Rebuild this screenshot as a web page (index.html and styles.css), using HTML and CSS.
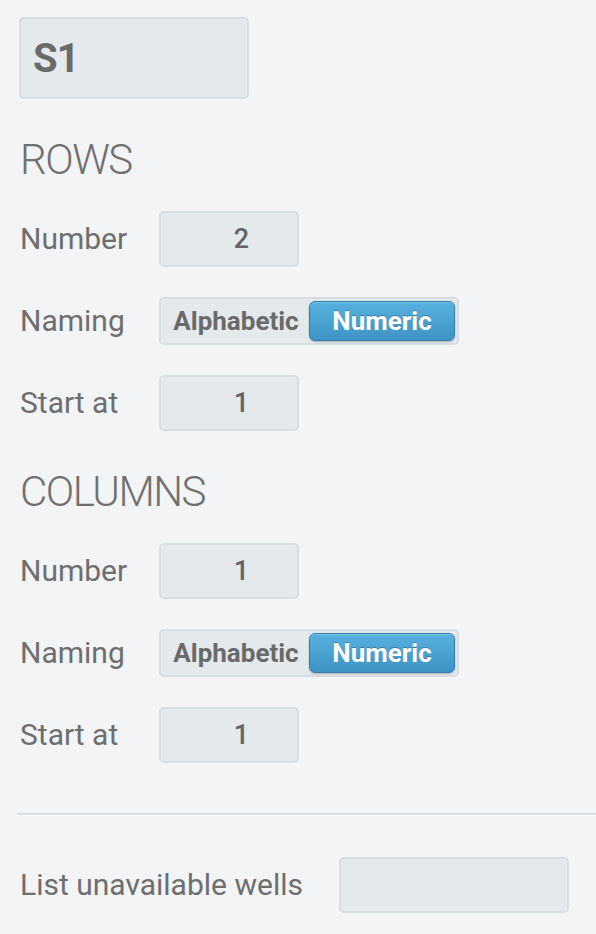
FILE: index.html
```html
<!DOCTYPE html>
<html>
<head>
<meta charset="utf-8">
<link rel="stylesheet" href="styles.css">
</head>
<body>
<div class="panel">
  <div class="name-box">S1</div>

  <h2 class="section-title">ROWS</h2>
  <div class="fields">
    <div class="label">Number</div>
    <div class="num-box">2</div>
    <div class="label">Naming</div>
    <div class="toggle">
      <span class="opt">Alphabetic</span>
      <span class="opt active">Numeric</span>
    </div>
    <div class="label">Start at</div>
    <div class="num-box">1</div>
  </div>

  <h2 class="section-title">COLUMNS</h2>
  <div class="fields">
    <div class="label">Number</div>
    <div class="num-box">1</div>
    <div class="label">Naming</div>
    <div class="toggle">
      <span class="opt">Alphabetic</span>
      <span class="opt active">Numeric</span>
    </div>
    <div class="label">Start at</div>
    <div class="num-box">1</div>
  </div>

  <div class="divider"></div>

  <div class="wells-row">
    <div class="label">List unavailable wells</div>
    <div class="wells-box"></div>
  </div>
</div>
</body>
</html>
```

FILE: styles.css
```css
html, body {
  margin: 0;
  padding: 0;
  background: #f2f4f6;
}
body {
  font-family: Roboto, "Liberation Sans", sans-serif;
  color: #6e6e6e;
  width: 596px;
  height: 934px;
  overflow: hidden;
}
.panel {
  display: flex;
  flex-direction: column;
  padding-top: 17px;
}
.name-box {
  box-sizing: border-box;
  margin-left: 19px;
  width: 230px;
  height: 82px;
  border: 2px solid #d6dee1;
  border-radius: 5px;
  background: #e4e9ec;
  padding-left: 12px;
  display: flex;
  align-items: center;
  font-size: 40px;
  font-weight: 700;
  letter-spacing: -1px;
  color: #6a6a6a;
}
.section-title {
  margin: 40px 0 30px 20px;
  font-size: 42px;
  line-height: 42px;
  font-weight: 300;
  letter-spacing: -1.5px;
  color: #707070;
}
.fields {
  display: grid;
  grid-template-columns: 139px auto;
  row-gap: 30px;
  align-items: center;
  justify-items: start;
  margin-left: 20px;
}
.label {
  font-size: 30px;
  line-height: 36px;
  color: #6e6e6e;
}
.num-box {
  box-sizing: border-box;
  width: 140px;
  height: 56px;
  border: 2px solid #d6dee1;
  border-radius: 5px;
  background: #e4e9ec;
  display: flex;
  align-items: center;
  justify-content: center;
  padding-left: 25px;
  font-size: 27px;
  font-weight: 500;
  color: #656565;
}
.toggle {
  box-sizing: border-box;
  width: 300px;
  height: 48px;
  border: 2px solid #d6dee1;
  border-radius: 5px;
  background: #e4e9ec;
  display: flex;
  align-items: stretch;
  padding: 2px;
}
.opt {
  flex: 1;
  display: flex;
  align-items: center;
  justify-content: center;
  font-size: 26px;
  font-weight: 700;
  color: #6a6a6a;
}
.opt.active {
  flex: 0 0 146px;
  box-sizing: border-box;
  border: 1px solid #2f7eac;
  border-radius: 6px;
  background: linear-gradient(#57b1de, #3d93c5);
  box-shadow: inset 0 1px 0 rgba(255,255,255,0.25), 0 1px 2px rgba(0,0,0,0.25);
  color: #ffffff;
  text-shadow: 0 -1px 0 rgba(0,0,0,0.25);
}
.divider {
  margin: 50px 0 0 17px;
  height: 2px;
  background: #d6dee1;
  border-bottom: 1px solid #ffffff;
}
.wells-row {
  display: flex;
  align-items: center;
  margin: 41px 0 0 20px;
}
.wells-row .label {
  width: 319px;
}
.wells-box {
  box-sizing: border-box;
  width: 230px;
  height: 56px;
  border: 2px solid #d6dee1;
  border-radius: 5px;
  background: #e4e9ec;
}
```
